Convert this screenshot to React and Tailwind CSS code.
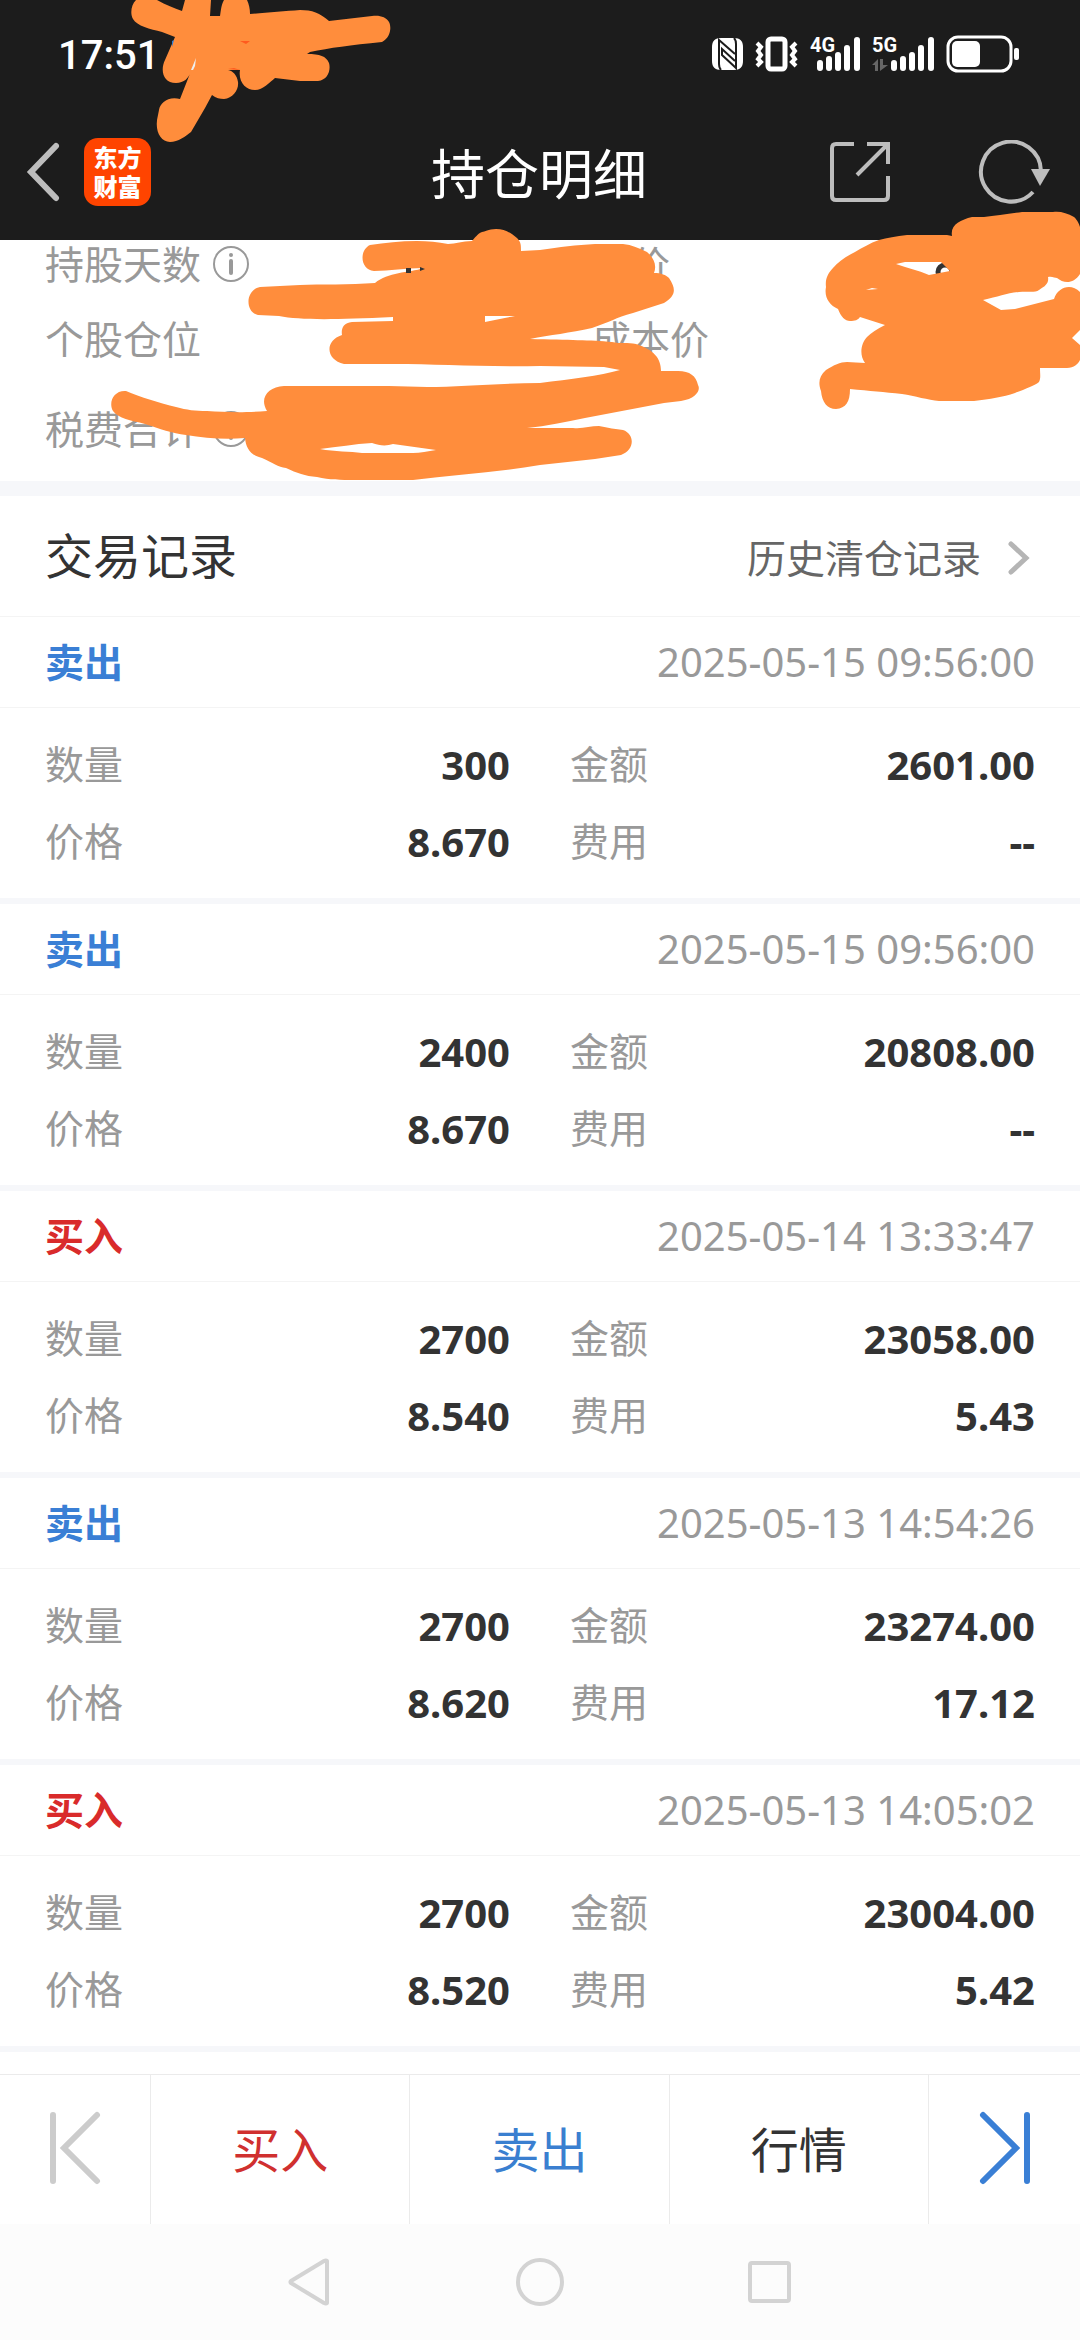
const records = [
  { type: "sell", time: "2025-05-15 09:56:00", quantity: "300", amount: "2601.00", price: "8.670", fee: "--" },
  { type: "sell", time: "2025-05-15 09:56:00", quantity: "2400", amount: "20808.00", price: "8.670", fee: "--" },
  { type: "buy", time: "2025-05-14 13:33:47", quantity: "2700", amount: "23058.00", price: "8.540", fee: "5.43" },
  { type: "sell", time: "2025-05-13 14:54:26", quantity: "2700", amount: "23274.00", price: "8.620", fee: "17.12" },
  { type: "buy", time: "2025-05-13 14:05:02", quantity: "2700", amount: "23004.00", price: "8.520", fee: "5.42" },
];

const SignalBars = () => (
  <svg width="43" height="34" viewBox="0 0 43 34" stroke="white" strokeWidth="6" strokeLinecap="round" aria-hidden="true">
    <path d="M3 26V31M12 22V31M21 18V31M30 11V31M40 3V31" />
  </svg>
);

const StatusBar = () => (
  <div className="flex h-[108px] items-center justify-between pr-[61px] pl-[58px] text-white">
    <time className="pt-1 font-[Roboto] text-[40px] leading-none font-medium">17:51</time>
    <div className="flex items-center gap-3">
      {/* nfc */}
      <svg width="31" height="32" viewBox="0 0 31 32" aria-hidden="true">
        <path d="M9 0H22C28 0 31 3 31 9V23C31 29 28 32 22 32H9C3 32 0 29 0 23V9C0 3 3 0 9 0Z" fill="white" />
        <path d="M9 32Q7 30 7 26V2L23 16" fill="none" stroke="#1c1c1c" strokeWidth="2" />
        <path d="M22 0Q24 2 24 6V30L10 17V11L23 23" fill="none" stroke="#1c1c1c" strokeWidth="2" />
      </svg>
      {/* vibrate */}
      <svg width="43" height="36" viewBox="0 0 43 36" fill="none" stroke="white" aria-hidden="true">
        <rect x="13" y="3" width="17" height="30" rx="3" strokeWidth="5" />
        <path d="M2 7L6 11L3 15L6 19L3 23L6 26L2 30M41 7L37 11L40 15L37 19L40 23L37 26L41 30" strokeWidth="4" />
      </svg>
      <div className="relative flex pl-[7px]">
        <span className="absolute top-0 left-0 font-[Roboto] text-[20px] leading-4 font-bold">4G</span>
        <SignalBars />
      </div>
      <div className="relative flex pl-[19px]">
        <span className="absolute top-0 left-0 font-[Roboto] text-[20px] leading-4 font-bold">5G</span>
        <svg className="absolute bottom-0 left-0" width="16" height="12" viewBox="0 0 16 12" fill="#666" aria-hidden="true">
          <path d="M0 6L6 0V12H3V6ZM8 0H11V6H16L8 12Z" />
        </svg>
        <SignalBars />
      </div>
      <svg width="73" height="38" viewBox="0 0 73 38" fill="none" aria-hidden="true">
        <rect x="2" y="2" width="63" height="34" rx="10" stroke="white" strokeWidth="3" />
        <rect x="6" y="6" width="28" height="26" rx="5" fill="white" />
        <rect x="68" y="13" width="5" height="12" rx="2" fill="white" />
      </svg>
    </div>
  </div>
);

const TitleBar = () => (
  <div className="grid h-[132px] grid-cols-[1fr_auto_1fr] items-center pr-[28px] pb-1 pl-[26px]">
    <div className="flex items-center gap-[22px]">
      <button type="button" aria-label="返回">
        <svg width="36" height="60" viewBox="0 0 36 60" fill="none" stroke="#bdbdbd" strokeWidth="6" strokeLinecap="round">
          <path d="M30 4L5 30L30 56" />
        </svg>
      </button>
      <div className="flex h-[68px] w-[67px] flex-col items-center justify-center rounded-[14px] bg-[#ff4400] text-[24px] leading-[29px] font-black text-white">
        <span>东方</span>
        <span>财富</span>
      </div>
    </div>
    <h1 className="pt-1 text-[54px] leading-[60px] text-white">持仓明细</h1>
    <div className="flex items-center justify-end gap-[88px]">
      <button type="button" aria-label="分享">
        <svg width="60" height="60" viewBox="0 0 60 60" fill="none" stroke="#bdbdbd" strokeWidth="4">
          <path d="M24 2H6Q2 2 2 6V54Q2 58 6 58H54Q58 58 58 54V34M37 2H58V22M57 3L27 33" />
        </svg>
      </button>
      <button type="button" aria-label="刷新">
        <svg width="74" height="64" viewBox="0 0 74 64" fill="none" stroke="#bdbdbd" strokeWidth="4">
          <path d="M55 52A30 30 0 1 1 63 31" />
          <path d="M53 29H72L62 46Z" fill="#bdbdbd" stroke="none" />
        </svg>
      </button>
    </div>
  </div>
);

const InfoIcon = () => (
  <svg width="36" height="36" viewBox="0 0 36 36" fill="none" stroke="#999" aria-hidden="true">
    <circle cx="18" cy="18" r="17" strokeWidth="2" />
    <path d="M18 15V27" strokeWidth="4" strokeLinecap="round" />
    <circle cx="18" cy="9" r="2" fill="#999" stroke="none" />
  </svg>
);

const Summary = () => (
  <section className="px-[45px] pt-1 pb-8 text-[39px] leading-10 text-[#999]">
    <div className="grid grid-cols-2 gap-x-[104px] gap-y-[35px]">
      <span className="flex items-center gap-3">持股天数 <InfoIcon /></span>
      <span>现价</span>
      <span>个股仓位</span>
      <span>成本价</span>
    </div>
    <div className="mt-[50px] flex items-center gap-3">税费合计 <InfoIcon /></div>
  </section>
);

// orange brush marks covering the private figures
const BrushMarks = () => (
  <svg className="pointer-events-none absolute top-0 left-0 w-full" viewBox="0 0 1080 482" fill="#ff8d3c" aria-hidden="true">
    <circle cx="945" cy="272" r="7" fill="none" stroke="#333" strokeWidth="5" />
    <path d="M136 0C131 5 130 14 133 19C137 26 150 29 162 32L175 37L165 60C160 70 163 83 176 83C184 83 189 78 191 71L180 99C168 96 160 103 159 110L158 115C154 130 160 142 170 142C178 142 186 136 191 132L205 108L212 95C216 98 220 99 224 99C233 98 239 90 238 82C237 75 233 71 228 70L240 70C238 82 246 90 255 90C263 90 270 82 275 78L300 81H318C328 80 331 70 329 63C326 56 320 54 307 54L310 52C330 48 350 45 382 42C390 38 392 28 389 22C386 17 380 15 372 16L329 21C320 13 312 10 300 10C285 11 265 13 250 14C250 9 249 4 247 0H224C221 5 221 11 220 16H210L211 0H185L182 11C174 8 166 5 157 0Z" />
    <path d="M191 70L196 58L195 66L193 70Z" fill="#eee" />
    <path d="M172 47V41L174 40Z" fill="#2f7fd8" />
    <path d="M240 41H250L246 44ZM228 69L234 68L240 70Z" fill="#ff5a1e" />
    <path
      fillRule="evenodd"
      d="M370 245C359 250 360 270 374 271C390 271 405 268 424 268C408 273 388 272 375 283C350 285 320 284 300 285L260 287C245 290 245 312 258 315L279 316C300 320 330 320 393 317V321L352 322C343 323 341 329 342 335C324 341 326 360 344 364L393 364C440 364 480 367 540 366L604 367L620 370C600 376 570 379 540 383C500 383 460 387 427 387L389 386H284C268 387 259 398 267 411C240 413 225 412 207 411C195 411 187 410 176 407C160 403 140 397 126 391C114 390 108 402 113 411C119 419 130 420 145 424C160 429 172 433 186 435C205 438 225 440 245 438C246 448 250 455 262 458C273 463 278 467 286 468C297 473 305 476 317 477C330 480 340 480 355 480H413C455 475 500 472 540 465L595 459L621 455C635 450 635 434 623 430C616 429 608 428 599 426C590 426 583 429 573 428H540L527 428C547 426 565 422 585 418L664 403L681 401C696 399 701 390 698 385C696 376 690 371 678 371H661C661 358 654 350 636 344C628 342 620 344 612 342C590 340 570 340 530 339C550 335 570 333 592 328C610 322 615 318 633 313L664 303C675 296 677 290 669 278C666 275 661 273 654 273C657 265 654 258 647 252C639 248 632 245 623 244H595C576 245 560 247 540 250L521 251C521 245 521 242 517 238C511 233 505 229 496 229C488 229 485 232 482 232C477 234 475 238 472 241C462 241 456 244 448 244C438 242 428 241 417 241C400 241 385 243 370 245ZM485 316H515C504 318 495 320 485 322ZM320 449C338 447 354 444 372 443C380 446 387 446 393 444L436 450C428 451 420 453 413 453H362C350 451 335 452 320 449Z"
    />
    <path
      fillRule="evenodd"
      d="M952 236L947 235H907C896 236 887 238 879 240C870 243 862 248 855 252C845 257 838 262 833 268C828 273 825 279 826 287C824 297 829 305 838 309C841 317 845 321 850 321C855 321 858 320 860 317L885 325C877 329 871 333 867 337C861 343 859 355 865 363L847 362C840 362 834 365 826 370C819 376 818 383 821 391C822 402 827 409 836 409C846 408 850 402 850 389C870 391 884 392 902 394C915 396 928 400 939 401H974C990 399 1003 397 1015 393C1025 389 1034 386 1039 382C1041 378 1040 374 1040 368H1067C1074 368 1078 364 1080 360V345L1072 338L1080 330V292C1071 283 1058 287 1054 299L1015 309L1001 310L983 300C998 297 1007 293 1019 292C1028 291 1035 293 1039 290C1046 286 1049 283 1048 277C1052 276 1055 278 1057 278C1063 283 1073 285 1080 274V227C1078 220 1074 217 1074 217C1067 213 1060 211 1053 212H1022C1008 214 995 216 984 217H972C960 220 950 225 952 236ZM896 264L905 262H941L950 271L929 275C918 270 907 268 896 264ZM866 290L872 288L878 289Z"
    />
    <path d="M406 268H411V273H406ZM420 267L425 269L420 271Z" fill="#333" />
  </svg>
);

const Field = ({ label, value }) => (
  <div className="flex h-[77px] items-center justify-between">
    <dt className="text-[39px] text-[#999]">{label}</dt>
    <dd className="text-[40px] font-bold text-[#333]">{value}</dd>
  </div>
);

const RecordCard = ({ record }) => (
  <li className="border-b-[6px] border-[#f6f7fa]">
    <div className="flex h-[91px] items-center justify-between border-b border-[#f4f4f4] px-[45px]">
      {record.type === "buy" ? (
        <span className="text-[39px] font-bold text-[#d92b2b]">买入</span>
      ) : (
        <span className="text-[39px] font-bold text-[#3a7fd5]">卖出</span>
      )}
      <time className="text-[40px] text-[#999]">{record.time}</time>
    </div>
    <dl className="grid grid-cols-2 gap-x-[60px] px-[45px] py-[18px]">
      <Field label="数量" value={record.quantity} />
      <Field label="金额" value={record.amount} />
      <Field label="价格" value={record.price} />
      <Field label="费用" value={record.fee} />
    </dl>
  </li>
);

const ActionBar = () => (
  <div className="mt-auto grid h-[150px] grid-cols-[151px_1fr_1fr_1fr_151px] divide-x divide-[#ebebeb] border-t border-[#ebebeb] text-5xl">
    <button type="button" aria-label="上一个" className="flex items-center justify-center pb-1">
      <svg width="52" height="74" viewBox="0 0 52 74" fill="none" stroke="#ccc" strokeWidth="6" strokeLinecap="round">
        <path d="M4 4V70M48 4L15 37L48 70" />
      </svg>
    </button>
    <button type="button" className="text-[#d0302f]">买入</button>
    <button type="button" className="text-[#3a7fd0]">卖出</button>
    <button type="button" className="text-[#333]">行情</button>
    <button type="button" aria-label="下一个" className="flex items-center justify-center pb-1">
      <svg width="52" height="74" viewBox="0 0 52 74" fill="none" stroke="#3a7fd5" strokeWidth="6" strokeLinecap="round">
        <path d="M48 4V70M4 4L37 37L4 70" />
      </svg>
    </button>
  </div>
);

const SystemNav = () => (
  <nav className="flex h-[116px] items-center justify-center gap-[182px] bg-[#fcfcfc]">
    <button type="button" aria-label="后退">
      <svg width="48" height="48" viewBox="0 0 48 48" fill="none" stroke="#d3d3d3" strokeWidth="4" strokeLinejoin="round">
        <path d="M41 3V45Q40 46 38 45L5 25Q4 24 5 23L38 3Q40 2 41 3Z" />
      </svg>
    </button>
    <button type="button" aria-label="主页">
      <svg width="48" height="48" viewBox="0 0 48 48" fill="none" stroke="#d3d3d3" strokeWidth="4">
        <circle cx="24" cy="24" r="22" />
      </svg>
    </button>
    <button type="button" aria-label="最近任务">
      <svg width="48" height="48" viewBox="0 0 48 48" fill="none" stroke="#d3d3d3" strokeWidth="4">
        <rect x="4" y="5" width="39" height="38" rx="2" />
      </svg>
    </button>
  </nav>
);

const App = () => {
  return (
    <div className="relative flex min-h-screen flex-col bg-white font-['Noto_Sans','Noto_Sans_CJK_SC',sans-serif]" lang="zh-CN">
      <header className="bg-[#1c1c1c]">
        <StatusBar />
        <TitleBar />
      </header>

      <Summary />

      <section className="border-t-[15px] border-[#f6f7fa]">
        <div className="flex h-[121px] items-center justify-between border-b border-[#f4f4f4] px-[45px]">
          <h2 className="text-5xl text-[#333]">交易记录</h2>
          <a href="#history" className="flex items-center gap-[26px] pt-1 text-[39px] text-[#666]">
            历史清仓记录
            <svg width="28" height="36" viewBox="0 0 28 36" fill="none" stroke="#b5b5b5" strokeWidth="5" strokeLinecap="round" aria-hidden="true">
              <path d="M4 4L19 18L4 32" />
            </svg>
          </a>
        </div>
        <ul>
          {records.map((record, index) => (
            <RecordCard key={index} record={record} />
          ))}
        </ul>
      </section>

      <ActionBar />
      <SystemNav />
      <BrushMarks />
    </div>
  );
};

export default App;
